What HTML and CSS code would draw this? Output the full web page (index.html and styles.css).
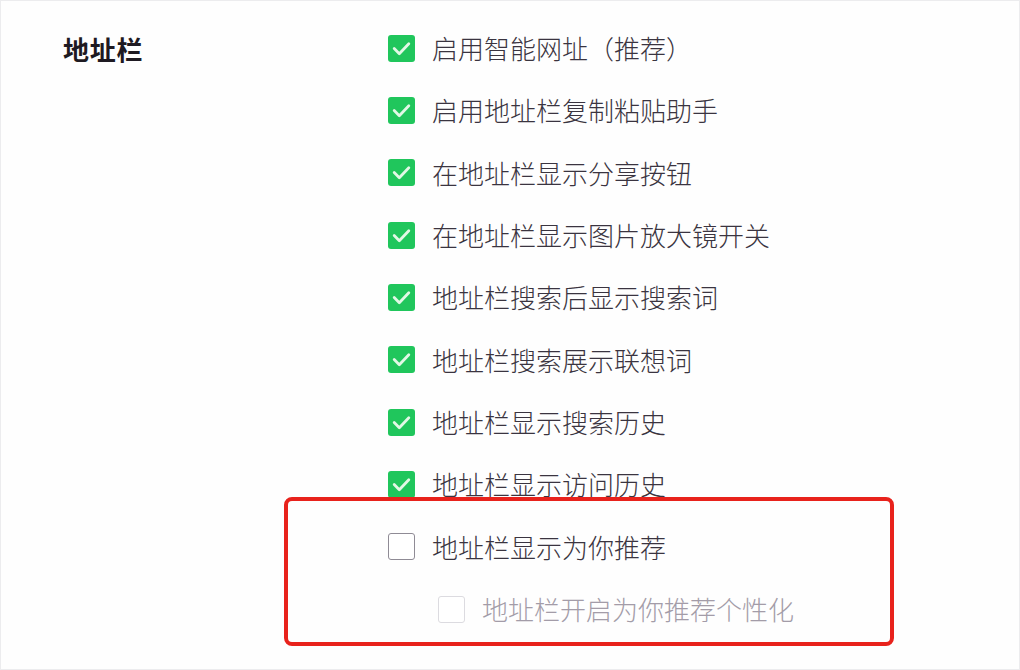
FILE: index.html
```html
<!DOCTYPE html>
<html lang="zh-CN">
<head>
<meta charset="utf-8">
<title>地址栏设置</title>
<link rel="stylesheet" href="styles.css">
</head>
<body>
<div class="frame">
  <section class="section">
    <div class="label-col"><h2 class="label">地址栏</h2></div>
    <div class="options">
      <div class="row"><span class="cb on"><svg viewBox="0 0 27 27"><path d="M6.2 13.6 L11.3 18.7 L20.8 8.8"/></svg></span><span class="txt">启用智能网址（推荐）</span></div>
      <div class="row"><span class="cb on"><svg viewBox="0 0 27 27"><path d="M6.2 13.6 L11.3 18.7 L20.8 8.8"/></svg></span><span class="txt">启用地址栏复制粘贴助手</span></div>
      <div class="row"><span class="cb on"><svg viewBox="0 0 27 27"><path d="M6.2 13.6 L11.3 18.7 L20.8 8.8"/></svg></span><span class="txt">在地址栏显示分享按钮</span></div>
      <div class="row"><span class="cb on"><svg viewBox="0 0 27 27"><path d="M6.2 13.6 L11.3 18.7 L20.8 8.8"/></svg></span><span class="txt">在地址栏显示图片放大镜开关</span></div>
      <div class="row"><span class="cb on"><svg viewBox="0 0 27 27"><path d="M6.2 13.6 L11.3 18.7 L20.8 8.8"/></svg></span><span class="txt">地址栏搜索后显示搜索词</span></div>
      <div class="row"><span class="cb on"><svg viewBox="0 0 27 27"><path d="M6.2 13.6 L11.3 18.7 L20.8 8.8"/></svg></span><span class="txt">地址栏搜索展示联想词</span></div>
      <div class="row"><span class="cb on"><svg viewBox="0 0 27 27"><path d="M6.2 13.6 L11.3 18.7 L20.8 8.8"/></svg></span><span class="txt">地址栏显示搜索历史</span></div>
      <div class="row"><span class="cb on"><svg viewBox="0 0 27 27"><path d="M6.2 13.6 L11.3 18.7 L20.8 8.8"/></svg></span><span class="txt">地址栏显示访问历史</span></div>
      <div class="highlight">
        <div class="row"><span class="cb off"></span><span class="txt">地址栏显示为你推荐</span></div>
        <div class="row sub"><span class="cb disabled"></span><span class="txt dim">地址栏开启为你推荐个性化</span></div>
      </div>
    </div>
  </section>
</div>
</body>
</html>
```

FILE: styles.css
```css
html, body {
  margin: 0;
  padding: 0;
  background: #ffffff;
}

.frame {
  width: 1020px;
  height: 670px;
  box-sizing: border-box;
  border: 1px solid #ececee;
  background: #fefefe;
  overflow: hidden;
  font-family: "Noto Sans CJK SC", "Noto Sans", sans-serif;
}

.section {
  display: flex;
  padding: 16px 0 0 62px;
}

.label-col {
  width: 325px;
  flex: none;
}

.label {
  margin: 0;
  height: 62.33px;
  display: flex;
  align-items: center;
  font-size: 26px;
  font-weight: 700;
  color: #1e1a22;
  letter-spacing: 0.8px;
}

.options {
  display: flex;
  flex-direction: column;
}

.row {
  height: 62.33px;
  display: flex;
  align-items: center;
  gap: 17px;
}

.row.sub {
  padding-left: 50px;
}

.cb {
  width: 27px;
  height: 27px;
  box-sizing: border-box;
  border-radius: 3px;
  flex: none;
  display: flex;
  align-items: center;
  justify-content: center;
}

.cb svg {
  width: 27px;
  height: 27px;
  fill: none;
  stroke: #e2f8e6;
  stroke-width: 2.8;
  stroke-linecap: round;
  stroke-linejoin: round;
}

.cb.on {
  background: #20c65c;
}

.cb.off {
  background: #ffffff;
  border: 1.5px solid #8f8b95;
}

.cb.disabled {
  background: #ffffff;
  border: 1.5px solid #dcdbe0;
}

.txt {
  font-size: 26px;
  font-weight: 300;
  color: #3a3440;
  line-height: 1;
}

.txt.dim {
  color: #a39ca8;
}

.highlight {
  position: relative;
}

.highlight::before {
  content: "";
  position: absolute;
  left: -104px;
  top: -19px;
  width: 610px;
  bottom: -6px;
  box-sizing: border-box;
  border: 4.5px solid #e8221c;
  border-radius: 8px;
  pointer-events: none;
}
```
